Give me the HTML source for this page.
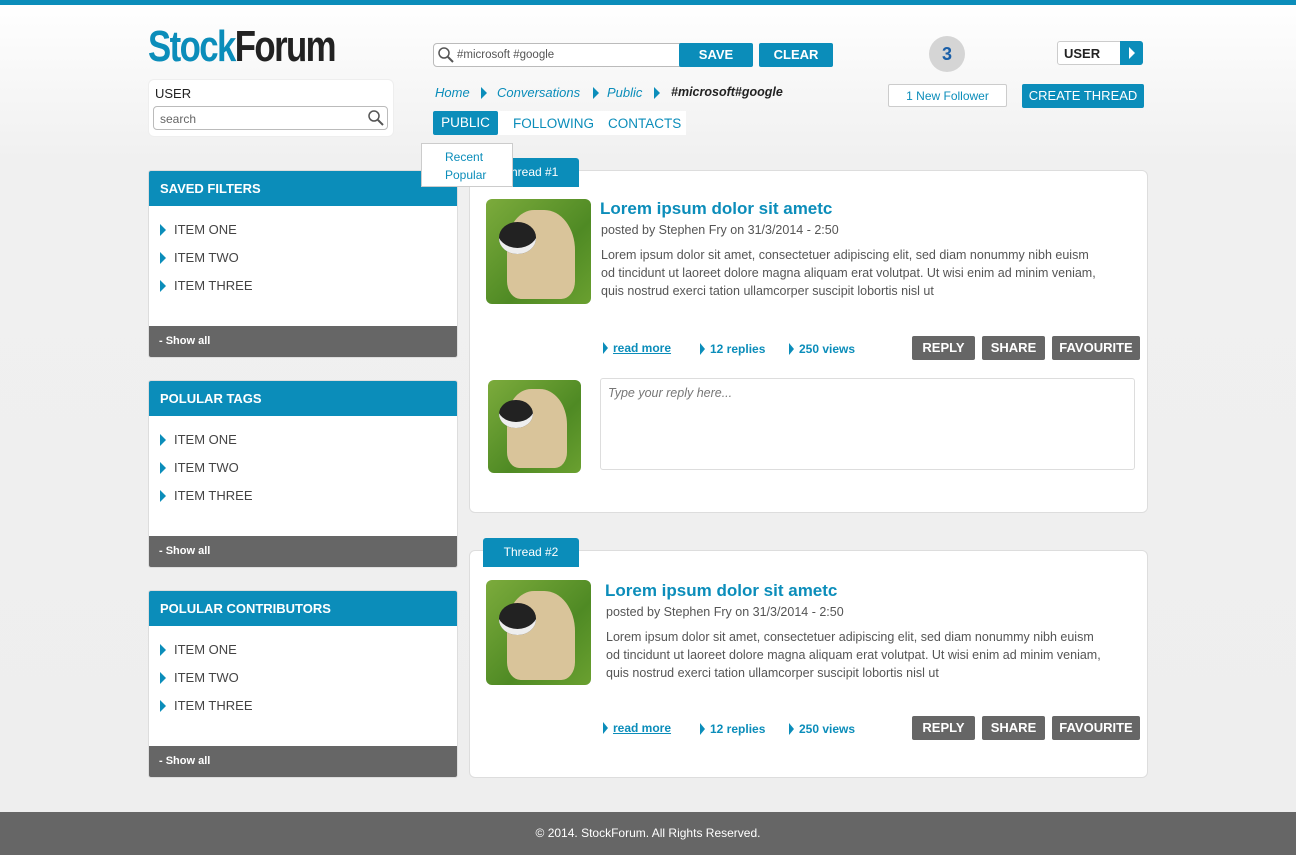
<!DOCTYPE html>
<html><head><meta charset="utf-8"><style>
*{margin:0;padding:0;box-sizing:border-box}
body{width:1296px;height:855px;position:relative;overflow:hidden;font-family:"Liberation Sans",sans-serif;background:linear-gradient(#fff 0,#f0f0f0 160px,#eee 100%);}
.a{position:absolute}
.blue{background:#0b8dba;color:#fff}
.btn{position:absolute;font-size:13px;font-weight:bold;text-align:center;border-radius:2px}
.side{position:absolute;left:148px;width:310px;height:188px;background:#fff;border:1px solid #ddd;border-radius:3px;overflow:hidden}
.side .h{height:35px;background:#0b8dba;color:#fff;font-size:13px;font-weight:bold;padding:10px 11px}
.side .it{position:absolute;left:11px;font-size:13px;color:#444}
.side .it:before{content:"";display:inline-block;border-left:6px solid #0b8dba;border-top:6px solid transparent;border-bottom:6px solid transparent;margin-right:8px;vertical-align:-2px}
.side .f{position:absolute;bottom:0;left:0;right:0;height:31px;background:#666;color:#fff;font-size:11px;font-weight:bold;padding:9px 10px}
.card{position:absolute;left:469px;width:679px;background:#fff;border:1px solid #ddd;border-radius:6px}
.tab{position:absolute;left:483px;width:96px;height:29px;background:#0b8dba;color:#fff;font-size:12px;text-align:center;line-height:29px;border-radius:3px 3px 0 0}
.pug{position:absolute;border-radius:6px;overflow:hidden;background:linear-gradient(135deg,#7cab3c,#4f8a24 60%,#6aa030)}
.pug:before{content:"";position:absolute;left:20%;top:10%;width:65%;height:85%;background:#d9c49a;border-radius:40% 45% 20% 20%}
.pug:after{content:"";position:absolute;left:12%;top:22%;width:36%;height:30%;background:#222;border-radius:50%;box-shadow:inset 0 -8px 0 -2px #eee}
.ttl{position:absolute;color:#0b8dba;font-size:17px;font-weight:bold}
.meta{position:absolute;font-size:12.5px;color:#555}
.txt{position:absolute;font-size:12.5px;color:#555;line-height:18px;width:560px;white-space:nowrap}
.lk{position:absolute;font-size:12px;color:#0b8dba;font-weight:bold}
.lk:before{content:"";display:inline-block;border-left:5px solid #0b8dba;border-top:6px solid transparent;border-bottom:6px solid transparent;margin-right:5px;vertical-align:-2px}
.gb{position:absolute;height:24px;background:#666;color:#fff;font-size:13px;font-weight:bold;text-align:center;line-height:24px;border-radius:2px}
.bc{position:absolute;top:85px;font-size:13px;font-style:italic;color:#0b8dba}
.tri{position:absolute;top:87px;border-left:6px solid #0b8dba;border-top:6px solid transparent;border-bottom:6px solid transparent}
</style></head><body>
<div class="a" style="left:0;top:0;width:1296px;height:5px;background:#0b8dba"></div>
<div class="a" style="left:148px;top:22px;font-size:44px;font-weight:bold;letter-spacing:-2px;transform:scaleX(.79);transform-origin:left"><span style="color:#0b8dba">Stock</span><span style="color:#222">Forum</span></div>
<div class="a" style="left:148px;top:79px;width:246px;height:58px;background:#fff;border:1px solid #eee;border-radius:6px"></div>
<div class="a" style="left:155px;top:86px;font-size:13px;color:#222">USER</div>
<div class="a" style="left:153px;top:106px;width:235px;height:24px;border:1px solid #bbb;border-radius:4px;background:#fff;font-size:12px;color:#666;padding:5px 6px">search</div>
<svg class="a" style="left:367px;top:109px" width="18" height="18"><circle cx="7" cy="7" r="5" fill="none" stroke="#555" stroke-width="1.5"/><path d="M11 11l5 5" stroke="#555" stroke-width="2"/></svg>
<div class="a" style="left:433px;top:43px;width:248px;height:24px;border:1px solid #bbb;border-radius:4px 0 0 4px;background:#fff;font-size:11.5px;color:#555;padding:5px 0 0 23px">#microsoft #google</div>
<svg class="a" style="left:437px;top:46px" width="18" height="18"><circle cx="7" cy="7" r="5" fill="none" stroke="#555" stroke-width="1.5"/><path d="M11 11l5 5" stroke="#555" stroke-width="2"/></svg>
<div class="btn blue" style="left:679px;top:43px;width:74px;height:24px;line-height:24px">SAVE</div>
<div class="btn blue" style="left:759px;top:43px;width:74px;height:24px;line-height:24px">CLEAR</div>
<div class="bc" style="left:435px">Home</div><div class="tri" style="left:481px"></div>
<div class="bc" style="left:497px">Conversations</div><div class="tri" style="left:593px"></div>
<div class="bc" style="left:607px">Public</div><div class="tri" style="left:654px"></div>
<div class="bc" style="left:671px;color:#222;font-weight:bold;font-size:12.5px">#microsoft#google</div>
<div class="a" style="left:433px;top:111px;width:253px;height:24px;background:#fff"></div>
<div class="btn blue" style="left:433px;top:111px;width:65px;height:24px;line-height:24px;font-weight:normal;font-size:13.5px">PUBLIC</div>
<div class="a" style="left:513px;top:116px;font-size:13.5px;color:#0b8dba">FOLLOWING</div>
<div class="a" style="left:608px;top:116px;font-size:13.5px;color:#0b8dba">CONTACTS</div>
<div class="a" style="left:929px;top:36px;width:36px;height:36px;border-radius:50%;background:#d5d5d5;color:#1a5fa8;font-size:18px;font-weight:bold;text-align:center;line-height:36px">3</div>
<div class="a" style="left:888px;top:84px;width:119px;height:23px;background:#fff;border:1px solid #ccc;border-radius:2px;font-size:12px;color:#0b8dba;text-align:center;line-height:22px">1 New Follower</div>
<div class="a" style="left:1057px;top:41px;width:86px;height:24px;background:#fff;border:1px solid #ccc;border-radius:3px;font-size:13px;font-weight:bold;color:#222;padding:4px 6px">USER</div>
<div class="a" style="left:1120px;top:41px;width:23px;height:24px;background:#0b8dba;border-radius:0 3px 3px 0"></div>
<div class="a" style="left:1129px;top:47px;border-left:6px solid #fff;border-top:6px solid transparent;border-bottom:6px solid transparent"></div>
<div class="btn blue" style="left:1022px;top:84px;width:122px;height:24px;line-height:24px;font-size:13px;font-weight:normal">CREATE THREAD</div>

<div class="side" style="top:170px"><div class="h">SAVED FILTERS</div><div class="it" style="top:51px">ITEM ONE</div><div class="it" style="top:79px">ITEM TWO</div><div class="it" style="top:107px">ITEM THREE</div><div class="f">- Show all</div></div>
<div class="side" style="top:380px"><div class="h">POLULAR TAGS</div><div class="it" style="top:51px">ITEM ONE</div><div class="it" style="top:79px">ITEM TWO</div><div class="it" style="top:107px">ITEM THREE</div><div class="f">- Show all</div></div>
<div class="side" style="top:590px"><div class="h">POLULAR CONTRIBUTORS</div><div class="it" style="top:51px">ITEM ONE</div><div class="it" style="top:79px">ITEM TWO</div><div class="it" style="top:107px">ITEM THREE</div><div class="f">- Show all</div></div>

<div class="card" style="top:170px;height:343px"></div>
<div class="tab" style="top:158px">Thread #1</div>
<div class="pug" style="left:486px;top:199px;width:105px;height:105px"></div>
<div class="ttl" style="left:600px;top:199px">Lorem ipsum dolor sit ametc</div>
<div class="meta" style="left:601px;top:223px">posted by Stephen Fry on 31/3/2014 - 2:50</div>
<div class="txt" style="left:601px;top:246px">Lorem ipsum dolor sit amet, consectetuer adipiscing elit, sed diam nonummy nibh euism<br>od tincidunt ut laoreet dolore magna aliquam erat volutpat. Ut wisi enim ad minim veniam,<br>quis nostrud exerci tation ullamcorper suscipit lobortis nisl ut</div>
<div class="lk" style="left:603px;top:341px;text-decoration:underline">read more</div>
<div class="lk" style="left:700px;top:342px">12 replies</div>
<div class="lk" style="left:789px;top:342px">250 views</div>
<div class="gb" style="left:912px;top:336px;width:63px">REPLY</div>
<div class="gb" style="left:982px;top:336px;width:63px">SHARE</div>
<div class="gb" style="left:1052px;top:336px;width:88px">FAVOURITE</div>
<div class="pug" style="left:488px;top:380px;width:93px;height:93px"></div>
<div class="a" style="left:600px;top:378px;width:535px;height:92px;border:1px solid #ddd;border-radius:3px;font-size:12.5px;font-style:italic;color:#777;padding:7px 7px">Type your reply here...</div>

<div class="a" style="left:421px;top:143px;width:92px;height:44px;background:#fff;border:1px solid #ccc"></div>
<div class="a" style="left:445px;top:150px;font-size:12px;color:#0b8dba">Recent</div>
<div class="a" style="left:445px;top:168px;font-size:12px;color:#0b8dba">Popular</div>

<div class="card" style="top:550px;height:228px"></div>
<div class="tab" style="top:538px">Thread #2</div>
<div class="pug" style="left:486px;top:580px;width:105px;height:105px"></div>
<div class="ttl" style="left:605px;top:581px">Lorem ipsum dolor sit ametc</div>
<div class="meta" style="left:606px;top:605px">posted by Stephen Fry on 31/3/2014 - 2:50</div>
<div class="txt" style="left:606px;top:628px">Lorem ipsum dolor sit amet, consectetuer adipiscing elit, sed diam nonummy nibh euism<br>od tincidunt ut laoreet dolore magna aliquam erat volutpat. Ut wisi enim ad minim veniam,<br>quis nostrud exerci tation ullamcorper suscipit lobortis nisl ut</div>
<div class="lk" style="left:603px;top:721px;text-decoration:underline">read more</div>
<div class="lk" style="left:700px;top:722px">12 replies</div>
<div class="lk" style="left:789px;top:722px">250 views</div>
<div class="gb" style="left:912px;top:716px;width:63px">REPLY</div>
<div class="gb" style="left:982px;top:716px;width:63px">SHARE</div>
<div class="gb" style="left:1052px;top:716px;width:88px">FAVOURITE</div>

<div class="a" style="left:0;top:812px;width:1296px;height:43px;background:#666;color:#fff;font-size:12px;text-align:center;line-height:43px">© 2014. StockForum. All Rights Reserved.</div>
</body></html>
